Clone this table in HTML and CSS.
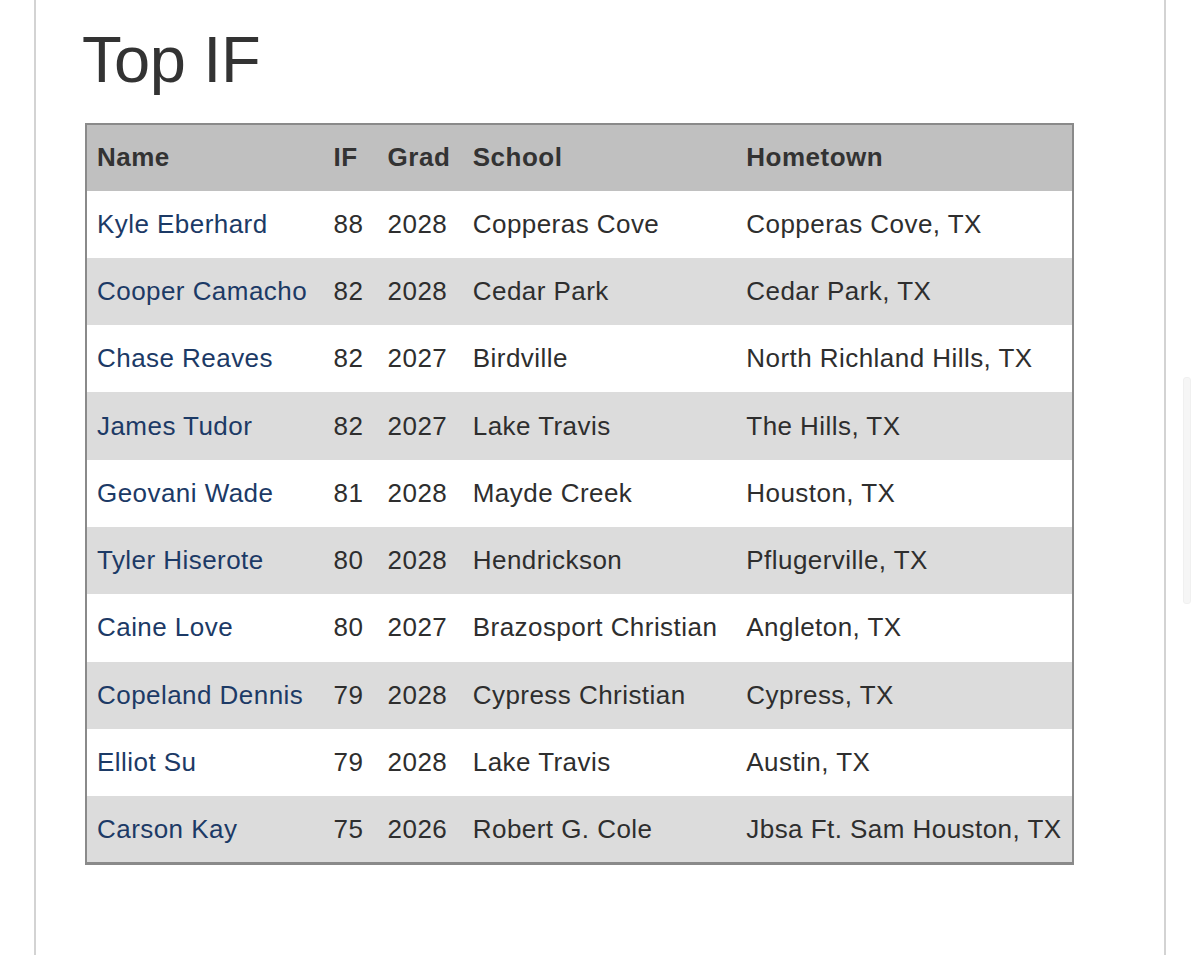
FILE: index.html
```html
<!DOCTYPE html>
<html lang="en">
<head>
<meta charset="utf-8">
<title>Top IF</title>
<link rel="stylesheet" href="styles.css">
</head>
<body>
<div class="page">
  <h1 class="title">Top IF</h1>
  <table class="rank">
    <colgroup>
      <col class="c-name">
      <col class="c-if">
      <col class="c-grad">
      <col class="c-school">
      <col class="c-town">
    </colgroup>
    <thead>
      <tr><th>Name</th><th>IF</th><th>Grad</th><th>School</th><th>Hometown</th></tr>
    </thead>
    <tbody>
      <tr><td><a class="player" href="#">Kyle Eberhard</a></td><td>88</td><td>2028</td><td>Copperas Cove</td><td>Copperas Cove, TX</td></tr>
      <tr><td><a class="player" href="#">Cooper Camacho</a></td><td>82</td><td>2028</td><td>Cedar Park</td><td>Cedar Park, TX</td></tr>
      <tr><td><a class="player" href="#">Chase Reaves</a></td><td>82</td><td>2027</td><td>Birdville</td><td>North Richland Hills, TX</td></tr>
      <tr><td><a class="player" href="#">James Tudor</a></td><td>82</td><td>2027</td><td>Lake Travis</td><td>The Hills, TX</td></tr>
      <tr><td><a class="player" href="#">Geovani Wade</a></td><td>81</td><td>2028</td><td>Mayde Creek</td><td>Houston, TX</td></tr>
      <tr><td><a class="player" href="#">Tyler Hiserote</a></td><td>80</td><td>2028</td><td>Hendrickson</td><td>Pflugerville, TX</td></tr>
      <tr><td><a class="player" href="#">Caine Love</a></td><td>80</td><td>2027</td><td>Brazosport Christian</td><td>Angleton, TX</td></tr>
      <tr><td><a class="player" href="#">Copeland Dennis</a></td><td>79</td><td>2028</td><td>Cypress Christian</td><td>Cypress, TX</td></tr>
      <tr><td><a class="player" href="#">Elliot Su</a></td><td>79</td><td>2028</td><td>Lake Travis</td><td>Austin, TX</td></tr>
      <tr><td><a class="player" href="#">Carson Kay</a></td><td>75</td><td>2026</td><td>Robert G. Cole</td><td>Jbsa Ft. Sam Houston, TX</td></tr>
    </tbody>
  </table>
</div>
<div class="scroll-thumb"></div>
</body>
</html>
```

FILE: styles.css
```css
html, body {
  margin: 0;
  padding: 0;
  background: #ffffff;
}

body {
  font-family: "Liberation Sans", Arial, Helvetica, sans-serif;
  color: #333333;
  overflow: hidden;
}

.page {
  box-sizing: border-box;
  margin-left: 34px;
  width: 1132px;
  min-height: 955px;
  border-left: 2px solid #d3d3d3;
  border-right: 2px solid #d3d3d3;
  padding: 20px 0 0 46px;
}

.title {
  margin: 0 0 23px 0;
  font-size: 65px;
  line-height: 80px;
  font-weight: normal;
  letter-spacing: -0.4px;
  color: #333333;
}

.rank {
  margin-left: 3px;
  border-collapse: collapse;
  table-layout: fixed;
  width: 989px;
  border: 2px solid #8a8a8a;
  border-bottom-width: 3px;
  font-size: 26px;
  letter-spacing: 0.45px;
}

.c-name { width: 237px; }
.c-if { width: 54px; }
.c-grad { width: 85px; }
.c-school { width: 273px; }
.c-town { width: 336px; }

.rank th,
.rank td {
  padding: 0 0 0 10px;
  text-align: left;
  vertical-align: middle;
  white-space: nowrap;
  overflow: visible;
}

.rank thead tr {
  height: 66.5px;
  background: #c0c0c0;
}

.rank th {
  font-weight: bold;
  color: #333333;
  letter-spacing: 0.5px;
}

.rank tbody tr {
  height: 67.3px;
  background: #ffffff;
}

.rank tbody tr:nth-child(even) {
  background: #dcdcdc;
}

.rank td {
  color: #2e2e2e;
}

.player {
  color: #1c3a66;
  text-decoration: none;
}

.scroll-thumb {
  position: fixed;
  left: 1183px;
  top: 377px;
  width: 6px;
  height: 225px;
  border-radius: 3px;
  background: #f6f6f6;
  border: 1px solid #f0f0f0;
}
```
